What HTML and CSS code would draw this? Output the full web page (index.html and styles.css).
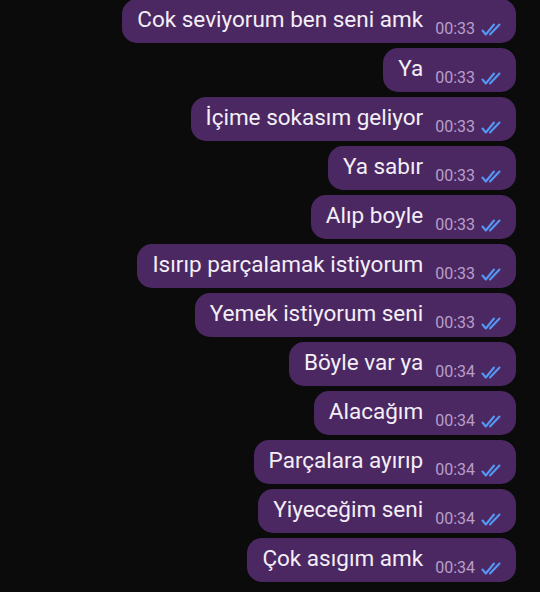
FILE: index.html
```html
<!DOCTYPE html>
<html>
<head>
<meta charset="utf-8">
<link rel="stylesheet" href="styles.css">
</head>
<body>
<div class="chat">
  <div class="msg"><span class="text">Cok seviyorum ben seni amk</span><span class="meta"><span class="time">00:33</span><svg class="ticks" viewBox="0 0 21 13"><path d="M1.5 7.5 L4.8 11.5 L13 1.5 M9 11.5 L18.5 1.5"/></svg></span></div>
  <div class="msg"><span class="text">Ya</span><span class="meta"><span class="time">00:33</span><svg class="ticks" viewBox="0 0 21 13"><path d="M1.5 7.5 L4.8 11.5 L13 1.5 M9 11.5 L18.5 1.5"/></svg></span></div>
  <div class="msg"><span class="text">İçime sokasım geliyor</span><span class="meta"><span class="time">00:33</span><svg class="ticks" viewBox="0 0 21 13"><path d="M1.5 7.5 L4.8 11.5 L13 1.5 M9 11.5 L18.5 1.5"/></svg></span></div>
  <div class="msg"><span class="text">Ya sabır</span><span class="meta"><span class="time">00:33</span><svg class="ticks" viewBox="0 0 21 13"><path d="M1.5 7.5 L4.8 11.5 L13 1.5 M9 11.5 L18.5 1.5"/></svg></span></div>
  <div class="msg"><span class="text">Alıp boyle</span><span class="meta"><span class="time">00:33</span><svg class="ticks" viewBox="0 0 21 13"><path d="M1.5 7.5 L4.8 11.5 L13 1.5 M9 11.5 L18.5 1.5"/></svg></span></div>
  <div class="msg"><span class="text">Isırıp parçalamak istiyorum</span><span class="meta"><span class="time">00:33</span><svg class="ticks" viewBox="0 0 21 13"><path d="M1.5 7.5 L4.8 11.5 L13 1.5 M9 11.5 L18.5 1.5"/></svg></span></div>
  <div class="msg"><span class="text">Yemek istiyorum seni</span><span class="meta"><span class="time">00:33</span><svg class="ticks" viewBox="0 0 21 13"><path d="M1.5 7.5 L4.8 11.5 L13 1.5 M9 11.5 L18.5 1.5"/></svg></span></div>
  <div class="msg"><span class="text">Böyle var ya</span><span class="meta"><span class="time">00:34</span><svg class="ticks" viewBox="0 0 21 13"><path d="M1.5 7.5 L4.8 11.5 L13 1.5 M9 11.5 L18.5 1.5"/></svg></span></div>
  <div class="msg"><span class="text">Alacağım</span><span class="meta"><span class="time">00:34</span><svg class="ticks" viewBox="0 0 21 13"><path d="M1.5 7.5 L4.8 11.5 L13 1.5 M9 11.5 L18.5 1.5"/></svg></span></div>
  <div class="msg"><span class="text">Parçalara ayırıp</span><span class="meta"><span class="time">00:34</span><svg class="ticks" viewBox="0 0 21 13"><path d="M1.5 7.5 L4.8 11.5 L13 1.5 M9 11.5 L18.5 1.5"/></svg></span></div>
  <div class="msg"><span class="text">Yiyeceğim seni</span><span class="meta"><span class="time">00:34</span><svg class="ticks" viewBox="0 0 21 13"><path d="M1.5 7.5 L4.8 11.5 L13 1.5 M9 11.5 L18.5 1.5"/></svg></span></div>
  <div class="msg"><span class="text">Çok asıgım amk</span><span class="meta"><span class="time">00:34</span><svg class="ticks" viewBox="0 0 21 13"><path d="M1.5 7.5 L4.8 11.5 L13 1.5 M9 11.5 L18.5 1.5"/></svg></span></div>
</div>
</body>
</html>
```
FILE: styles.css
```css
html, body {
  margin: 0;
  padding: 0;
  background: #0b0b0b;
  height: 592px;
  overflow: hidden;
}
.chat {
  display: flex;
  flex-direction: column;
  align-items: flex-end;
  gap: 5px;
  padding-right: 24px;
  margin-top: -1px;
  font-family: Roboto, "Noto Sans", sans-serif;
}
.msg {
  box-sizing: border-box;
  height: 44px;
  background: #4b2862;
  border-radius: 15px;
  display: flex;
  align-items: flex-start;
  padding: 0 14px 0 15px;
  color: #f4eef7;
}
.text {
  font-size: 22.5px;
  line-height: 26px;
  padding-top: 7px;
}
.meta {
  display: flex;
  align-items: center;
  margin-left: 12px;
  padding-top: 21px;
}
.time {
  font-size: 16px;
  line-height: 18px;
  color: #b99ec9;
}
.ticks {
  width: 21px;
  height: 13px;
  margin-left: 6px;
  fill: none;
  stroke: #5597f4;
  stroke-width: 2.1;
  stroke-linecap: round;
  stroke-linejoin: round;
}
```
